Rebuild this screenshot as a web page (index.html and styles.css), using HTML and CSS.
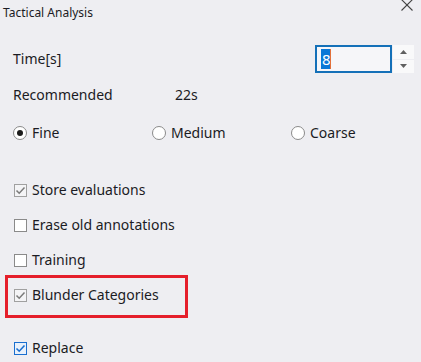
FILE: index.html
```html
<!DOCTYPE html>
<html>
<head>
<meta charset="utf-8">
<link rel="stylesheet" href="styles.css">
</head>
<body>
<div class="dialog">
  <div class="titlebar">
    <span class="title">Tactical Analysis</span>
    <svg class="close" width="12" height="12" viewBox="0 0 12 12"><path d="M0.5 0.5 L11.5 11.5 M11.5 0.5 L0.5 11.5" stroke="#444" stroke-width="1.1" fill="none"/></svg>
  </div>

  <div class="row time-row">
    <span class="label">Time[s]</span>
    <div class="spin">
      <div class="spin-input"><span class="sel">8</span><span class="caret"></span></div>
      <div class="spin-btns">
        <div class="spin-btn"><svg width="7" height="4" viewBox="0 0 7 4"><path d="M0 4 L3.5 0 L7 4Z" fill="#606060"/></svg></div>
        <div class="spin-btn"><svg width="7" height="4" viewBox="0 0 7 4"><path d="M0 0 L3.5 4 L7 0Z" fill="#606060"/></svg></div>
      </div>
    </div>
  </div>

  <div class="row rec-row">
    <span class="label rec-label">Recommended</span>
    <span class="label">22s</span>
  </div>

  <div class="row radio-row">
    <label class="opt radio-opt"><span class="radio on"></span>Fine</label>
    <label class="opt radio-opt"><span class="radio"></span>Medium</label>
    <label class="opt radio-opt last"><span class="radio"></span>Coarse</label>
  </div>

  <div class="checks">
    <label class="opt check-opt"><span class="check dis"><svg width="11" height="11" viewBox="0 0 11 11"><path d="M1.5 5.5 L4.2 8.2 L9.5 2.5" stroke="#7a7a7a" stroke-width="1.5" fill="none"/></svg></span>Store evaluations</label>
    <label class="opt check-opt"><span class="check"></span>Erase old annotations</label>
    <label class="opt check-opt"><span class="check"></span>Training</label>
    <div class="highlight">
      <label class="opt check-opt"><span class="check dis"><svg width="11" height="11" viewBox="0 0 11 11"><path d="M1.5 5.5 L4.2 8.2 L9.5 2.5" stroke="#7a7a7a" stroke-width="1.5" fill="none"/></svg></span>Blunder Categories</label>
    </div>
    <label class="opt check-opt replace"><span class="check blue"><svg width="11" height="11" viewBox="0 0 11 11"><path d="M1.5 5.5 L4.2 8.2 L9.5 2.5" stroke="#1a6fd0" stroke-width="1.6" fill="none"/></svg></span>Replace</label>
  </div>
</div>
</body>
</html>
```

FILE: styles.css
```css
html, body {
  margin: 0;
  padding: 0;
  background: #eeeef2;
  width: 421px;
  height: 362px;
  overflow: hidden;
}
.dialog {
  font-family: "Noto Sans", "Open Sans", sans-serif;
  color: #1b1b24;
  font-size: 14px;
}
.titlebar {
  display: flex;
  justify-content: space-between;
  align-items: flex-start;
  height: 44px;
  padding-left: 3px;
  padding-right: 8px;
}
.title {
  font-size: 12px;
  line-height: 14px;
  margin-top: 6px;
}
.close {
  margin-top: -1px;
}
.row {
  display: flex;
  align-items: center;
  padding-left: 13px;
}
.time-row {
  height: 30px;
  justify-content: space-between;
  padding-right: 7px;
}
.label {
  line-height: 18px;
}
.spin {
  display: flex;
  height: 28px;
}
.spin-input {
  width: 69px;
  height: 24px;
  border: 2px solid #1470b8;
  background: #f6f6f9;
  display: flex;
  align-items: center;
  padding-left: 4px;
}
.sel {
  background: #0a78d7;
  color: #ffffff;
  font-size: 15px;
  line-height: 20px;
  padding: 0 0 0 1px;
  width: 8px;
}
.caret {
  width: 1px;
  height: 20px;
  background: #e2703a;
}
.spin-btns {
  display: flex;
  flex-direction: column;
  gap: 1px;
  margin-left: 1px;
  width: 21px;
}
.spin-btn {
  flex: 1;
  background: #f9f9fa;
  display: flex;
  align-items: center;
  justify-content: center;
}
.rec-row {
  margin-top: 12px;
  height: 18px;
}
.rec-label {
  width: 162px;
}
.radio-row {
  margin-top: 17px;
  height: 24px;
  padding-left: 13px;
}
.opt {
  display: flex;
  align-items: center;
  line-height: 18px;
}
.radio-opt {
  flex: none;
  width: 139px;
}
.radio-opt.last {
  width: auto;
}
.radio {
  flex: none;
  width: 12px;
  height: 12px;
  border: 1px solid #8a8a8a;
  border-radius: 50%;
  background: #ffffff;
  margin-right: 5px;
  position: relative;
  box-sizing: content-box;
}
.radio.on::after {
  content: "";
  position: absolute;
  left: 3px;
  top: 3px;
  width: 6px;
  height: 6px;
  border-radius: 50%;
  background: #1b1b1b;
}
.checks {
  display: flex;
  flex-direction: column;
  margin-top: 36px;
  padding-left: 14px;
}
.check-opt {
  height: 18px;
  margin-bottom: 17px;
}
.check {
  flex: none;
  width: 11px;
  height: 11px;
  border: 1px solid #8a8a8a;
  background: #ffffff;
  margin-right: 5px;
  display: flex;
  align-items: center;
  justify-content: center;
}
.check.dis {
  background: #f4f4f6;
  border-color: #a0a0a0;
}
.check.blue {
  border-color: #1a6fd0;
  background: #e9f1fb;
}
.highlight {
  margin-left: -9px;
  width: 171px;
  height: 34px;
  padding-bottom: 3px;
  border: 3px solid #e51f2b;
  padding-left: 6px;
  display: flex;
  align-items: center;
  margin-top: -11px;
}
.highlight .check-opt {
  margin-bottom: 0;
}
.replace {
  margin-top: 21px;
}
```
